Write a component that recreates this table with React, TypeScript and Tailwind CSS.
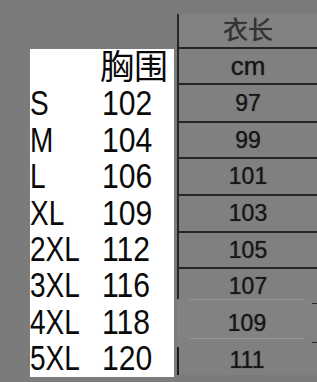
const sizes = [
  { size: 'S', chest: '102' },
  { size: 'M', chest: '104' },
  { size: 'L', chest: '106' },
  { size: 'XL', chest: '109' },
  { size: '2XL', chest: '112' },
  { size: '3XL', chest: '116' },
  { size: '4XL', chest: '118' },
  { size: '5XL', chest: '120' },
]

const lengths = [
  { label: 'cm', h: 'h-[36px]', t: 'text-[26px]' },
  { label: '97', h: 'h-[38px]', t: '' },
  { label: '99', h: 'h-[36px]', t: '' },
  { label: '101', h: 'h-[37px]', t: '' },
  { label: '103', h: 'h-[37px]', t: '' },
  { label: '105', h: 'h-[36px]', t: '' },
]

const sans = "font-['Liberation_Sans','Noto_Sans_CJK_SC',sans-serif]"

export default function App() {
  return (
    <div className={`flex h-[382px] w-[317px] overflow-hidden bg-[#7b7b7b] ${sans}`}>
      <div className="w-[30px] shrink-0" />

      {/* pasted white block with chest sizes */}
      <div className="mt-[49px] h-[328px] w-[144px] shrink-0 bg-white text-[#0a0a0a]">
        <div className="flex h-[36.4px] items-center pl-[70px] text-[34px] leading-none">胸围</div>
        {sizes.map((row) => (
          <div key={row.size} className="flex h-[36.4px] items-center text-[35px] leading-[36.4px]">
            <span className="inline-block w-[72px] origin-left scale-x-[0.8]">{row.size}</span>
            <span className="inline-block origin-left scale-x-[0.86]">{row.chest}</span>
          </div>
        ))}
      </div>

      <div className="w-[3px] shrink-0" />

      {/* spreadsheet column behind */}
      <div className="flex flex-1 flex-col pt-[14px] text-[23px] text-[#161616] [text-shadow:0_0_1px_#333]">
        <div className="flex h-[35px] items-center justify-center border-b-2 border-l-2 border-[#262626] bg-[#828282] text-[25px] text-[#333]">
          衣长
        </div>
        {lengths.map((row) => (
          <div
            key={row.label}
            className={`flex ${row.h} ${row.t} items-center justify-center border-b-2 border-l-2 border-[#262626] bg-[#808080]`}
          >
            {row.label}
          </div>
        ))}
        <div className="flex h-[30px] justify-center border-l-2 border-[#262626] bg-[#808080] pt-[6px] leading-[22px]">
          107
        </div>
        <div className="relative flex h-[39px] items-center justify-center bg-[#828282] pt-[10px]">
          <div className="absolute inset-x-[13px] top-0 h-[1px] bg-[#959595]" />
          <div className="absolute right-0 top-[4px] h-[1px] w-[5px] bg-[#2a2a2a]" />
          109
        </div>
        <div className="relative flex h-[37px] items-center bg-[#808080]">
          <div className="absolute inset-x-[13px] top-0 h-[1px] bg-[#959595]" />
          <div className="absolute right-0 top-[4px] h-[1px] w-[5px] bg-[#2a2a2a]" />
          <div className="mt-[8px] h-[28px] border-l-2 border-[#1a1a1a]" />
          <span className="flex-1 pr-[2px] pt-[8px] text-center">111</span>
        </div>
      </div>
    </div>
  )
}
